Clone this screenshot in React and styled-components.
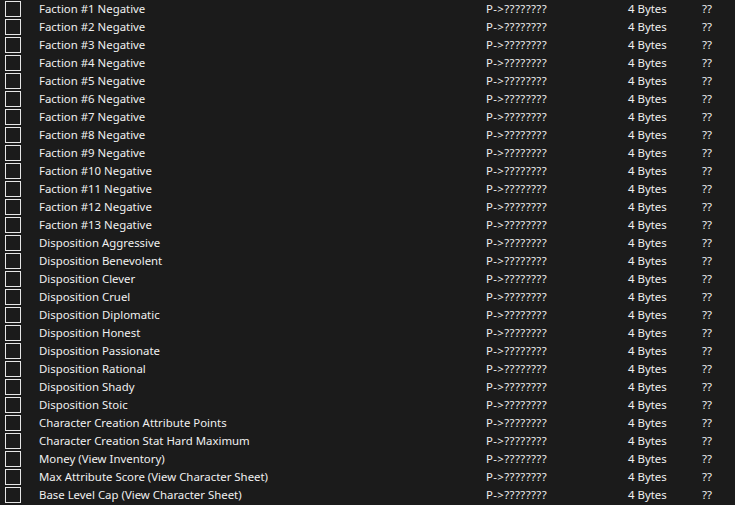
import React from "react";
import styled, { createGlobalStyle } from "styled-components";

const Global = createGlobalStyle`
  html, body {
    margin: 0;
    padding: 0;
    background: #1b1b1b;
    overflow: hidden;
  }
`;

const List = styled.div`
  display: flex;
  flex-direction: column;
  width: 735px;
  height: 505px;
  background: #1b1b1b;
  color: #f0f0f0;
  font-family: "Noto Sans", "Open Sans", sans-serif;
  font-size: 11.4px;
`;

const Row = styled.div`
  display: grid;
  grid-template-columns: 39px 447px 142px 74px 1fr;
  align-items: center;
  height: 18px;
  flex: none;
`;

const Check = styled.span`
  display: block;
  width: 14px;
  height: 14px;
  margin-left: 5px;
  border: 1px solid #e6e6e6;
  align-self: start;
  margin-top: 1px;
`;

const Cell = styled.span`
  white-space: nowrap;
  line-height: 18px;
  letter-spacing: ${(p) => (p.$wide ? "0.4px" : "0")};
`;

const names = [
  ...Array.from({ length: 13 }, (_, i) => `Faction #${i + 1} Negative`),
  "Disposition Aggressive",
  "Disposition Benevolent",
  "Disposition Clever",
  "Disposition Cruel",
  "Disposition Diplomatic",
  "Disposition Honest",
  "Disposition Passionate",
  "Disposition Rational",
  "Disposition Shady",
  "Disposition Stoic",
  "Character Creation Attribute Points",
  "Character Creation Stat Hard Maximum",
  "Money (View Inventory)",
  "Max Attribute Score (View Character Sheet)",
  "Base Level Cap (View Character Sheet)",
];

export default function App() {
  return (
    <>
      <Global />
      <List>
        {names.map((n) => (
          <Row key={n}>
            <Check />
            <Cell>{n}</Cell>
            <Cell $wide>P-&gt;????????</Cell>
            <Cell>4 Bytes</Cell>
            <Cell>??</Cell>
          </Row>
        ))}
      </List>
    </>
  );
}
